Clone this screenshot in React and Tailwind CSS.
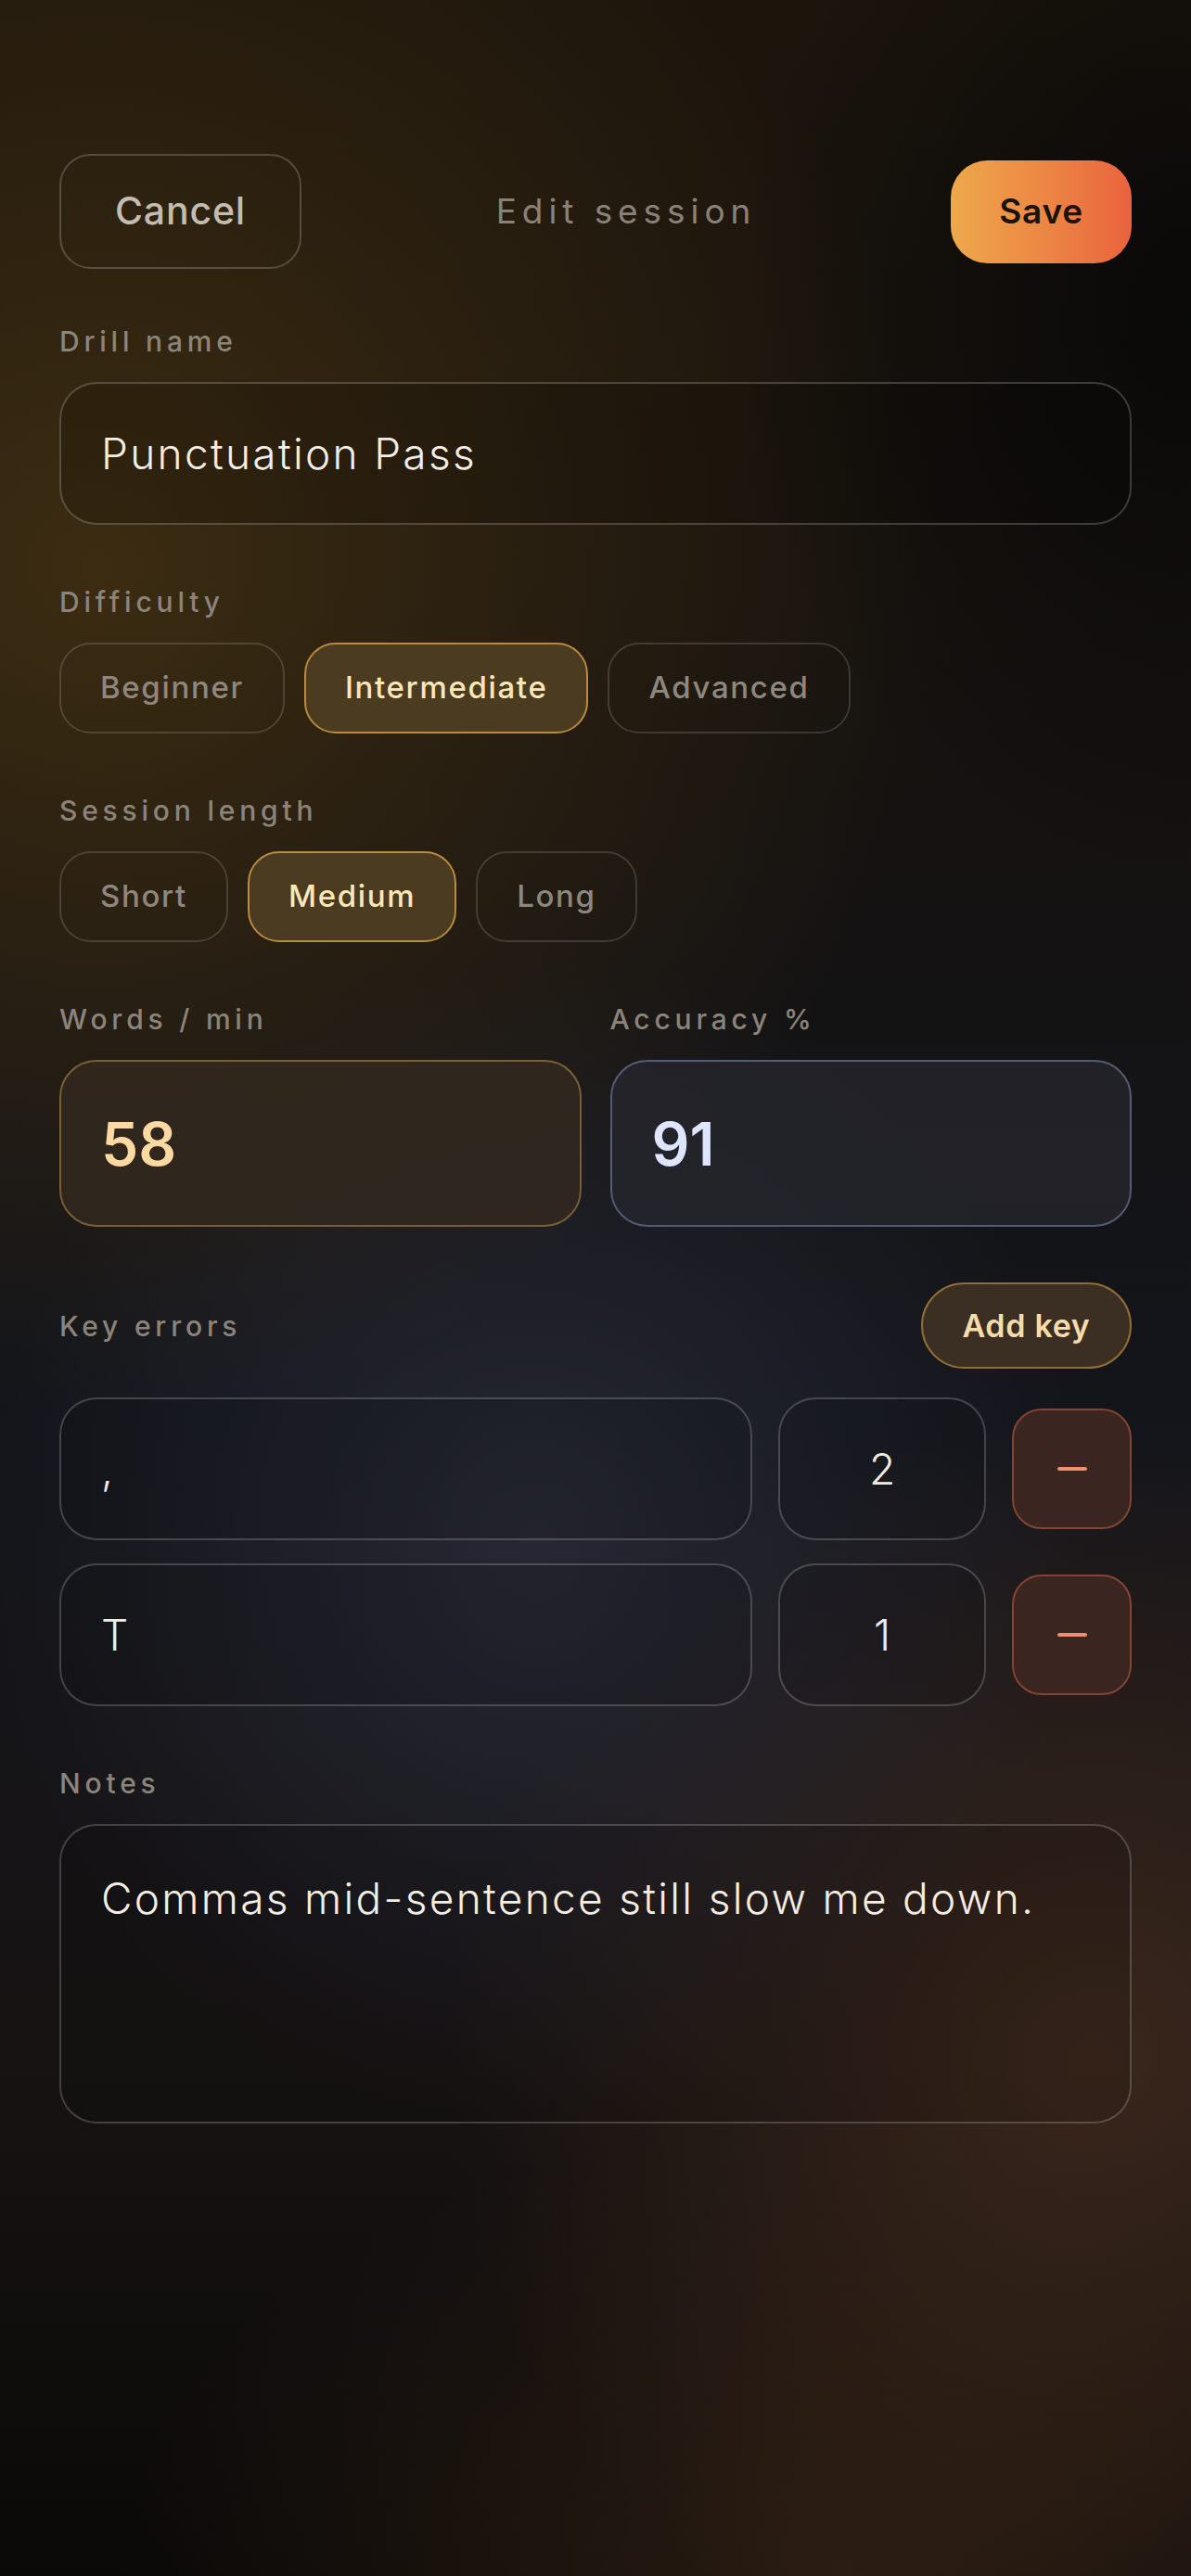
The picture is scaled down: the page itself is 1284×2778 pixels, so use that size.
import { useState } from "react";

const difficulties = ["Beginner", "Intermediate", "Advanced"];
const lengths = ["Short", "Medium", "Long"];

function Label({ children }) {
  return <p className="text-[30px] leading-none font-medium tracking-[0.16em] text-[#8b847b]">{children}</p>;
}

function Pill({ active, children, onClick }) {
  return (
    <button
      onClick={onClick}
      className={`h-[98px] rounded-[34px] border-2 px-[42px] text-[33px] font-medium tracking-[0.05em] ${active ? "border-[#b98a40] bg-[#4b3b20] text-[#fde6b8]" : "border-white/15 text-[#8e877f]"}`}
    >
      {children}
    </button>
  );
}

export default function App() {
  const [difficulty, setDifficulty] = useState("Intermediate");
  const [length, setLength] = useState("Medium");
  const [keys, setKeys] = useState([
    { id: 1, key: ",", count: "2" },
    { id: 2, key: "T", count: "1" }
  ]);

  const addKey = () => setKeys((current) => [...current, { id: Date.now(), key: "", count: "1" }]);
  const removeKey = (id) => setKeys((current) => current.filter((row) => row.id !== id));
  const updateKey = (id, field, value) =>
    setKeys((current) => current.map((row) => (row.id === id ? { ...row, [field]: value } : row)));

  return (
    <div className="min-h-[2778px] w-full bg-[radial-gradient(700px_900px_at_100%_12%,rgba(8,8,8,0.9),transparent_70%),radial-gradient(1300px_1300px_at_8%_22%,rgba(66,48,18,0.85),transparent_70%),radial-gradient(850px_900px_at_45%_60%,rgba(44,46,60,0.75),transparent_70%),radial-gradient(1000px_1000px_at_92%_80%,rgba(70,45,30,0.75),transparent_70%),radial-gradient(1100px_700px_at_70%_100%,rgba(48,32,20,0.8),transparent_70%),linear-gradient(180deg,#1c150c_0%,#151210_30%,#13151b_55%,#171313_80%,#0a0908_100%)] font-['Inter',sans-serif] text-[#f1ebe3]">
      <div className="px-16 pt-[166px] pb-24">
        <header className="flex items-center justify-between">
          <button className="h-[124px] w-[261px] rounded-[34px] border-2 border-white/20 text-[41px] font-medium tracking-[0.02em] text-[#c4bcb1]">
            Cancel
          </button>
          <h1 className="flex-1 text-center text-[37px] tracking-[0.16em] text-[#8a8278]">Edit session</h1>
          <button className="h-[111px] w-[195px] rounded-[40px] bg-gradient-to-r from-[#eca94b] to-[#e9623e] text-[37px] font-semibold tracking-[0.02em] text-[#1b1209]">
            Save
          </button>
        </header>

        <section className="mt-[63px]">
          <Label>Drill name</Label>
          <input
            defaultValue="Punctuation Pass"
            className="mt-[29px] h-[154px] w-full rounded-[40px] border-2 border-white/20 bg-black/15 px-[43px] text-[46px] font-light tracking-[0.05em] text-[#f3ede4] outline-none"
          />
        </section>

        <section className="mt-[68px]">
          <Label>Difficulty</Label>
          <div className="mt-[29px] flex gap-[21px]">
            {difficulties.map((item) => (
              <Pill key={item} active={difficulty === item} onClick={() => setDifficulty(item)}>
                {item}
              </Pill>
            ))}
          </div>
        </section>

        <section className="mt-[68px]">
          <Label>Session length</Label>
          <div className="mt-[29px] flex gap-[21px]">
            {lengths.map((item) => (
              <Pill key={item} active={length === item} onClick={() => setLength(item)}>
                {item}
              </Pill>
            ))}
          </div>
        </section>

        <section className="mt-[68px] grid grid-cols-2 gap-[31px]">
          <div>
            <Label>Words / min</Label>
            <input
              defaultValue="58"
              className="mt-[29px] h-[180px] w-full rounded-[40px] border-2 border-[#7a5f35] bg-[#33291f]/80 px-[43px] text-[64px] font-semibold text-[#fcd9a2] outline-none"
            />
          </div>
          <div>
            <Label>Accuracy %</Label>
            <input
              defaultValue="91"
              className="mt-[29px] h-[180px] w-full rounded-[40px] border-2 border-[#545c75] bg-[#26262d]/80 px-[43px] text-[64px] font-semibold text-[#dde5ff] outline-none"
            />
          </div>
        </section>

        <section className="mt-[60px]">
          <div className="flex items-center justify-between">
            <Label>Key errors</Label>
            <button
              onClick={addKey}
              className="h-[93px] w-[227px] rounded-full border-2 border-[#8f6d35] bg-[#3a2f22] text-[34px] font-semibold tracking-[0.02em] text-[#f6dcab]"
            >
              Add key
            </button>
          </div>
          <div className="mt-[31px] flex flex-col gap-[25px]">
            {keys.map((row) => (
              <div key={row.id} className="flex items-center gap-[28px]">
                <input
                  value={row.key}
                  onChange={(e) => updateKey(row.id, "key", e.target.value)}
                  className="h-[154px] min-w-0 flex-1 rounded-[40px] border-2 border-white/20 bg-black/10 px-[43px] text-[46px] font-light text-[#f0ebe4] outline-none"
                />
                <input
                  value={row.count}
                  onChange={(e) => updateKey(row.id, "count", e.target.value)}
                  className="h-[154px] w-[224px] rounded-[40px] border-2 border-white/20 bg-black/10 px-4 text-center text-[46px] font-light text-[#f0ebe4] outline-none"
                />
                <button
                  onClick={() => removeKey(row.id)}
                  className="flex h-[130px] w-[129px] items-center justify-center rounded-[32px] border-2 border-[#844433] bg-[#3a2520]"
                >
                  <span className="h-[4px] w-[32px] rounded-full bg-[#ef8f6d]" />
                </button>
              </div>
            ))}
          </div>
        </section>

        <section className="mt-[68px]">
          <Label>Notes</Label>
          <textarea
            defaultValue="Commas mid-sentence still slow me down."
            className="mt-[29px] block h-[323px] w-full resize-none rounded-[40px] border-2 border-white/20 bg-black/10 px-[43px] pt-[44px] text-[46px] leading-[1.5] font-light tracking-[0.05em] text-[#f3ede4] outline-none"
          />
        </section>
      </div>
    </div>
  );
}
